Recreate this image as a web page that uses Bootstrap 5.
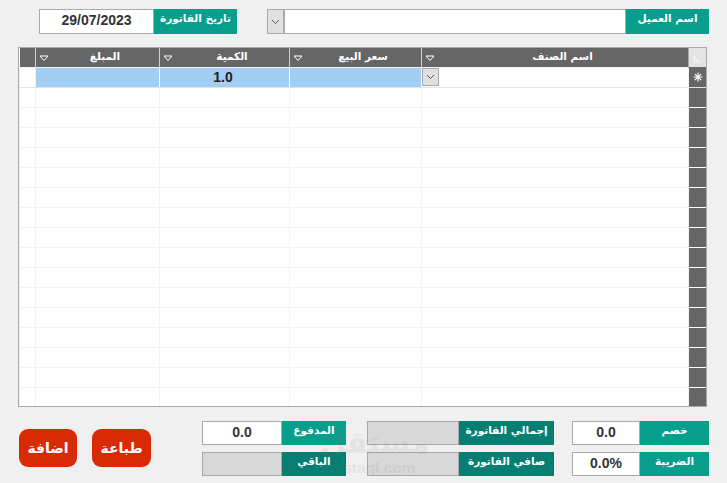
<!DOCTYPE html>
<html lang="ar">
<head>
    <meta charset="UTF-8">
    <meta name="viewport" content="width=device-width, initial-scale=1.0">
    <title>فاتورة</title>
    <link rel="stylesheet" href="https://cdn.jsdelivr.net/npm/bootstrap@5.3.0/dist/css/bootstrap.min.css">
    <style>
        body {
            background-color: #f0f0f0;
            font-family: "DejaVu Sans", "Liberation Sans", sans-serif;
            height: 483px;
            overflow: hidden;
        }
        .page-wrap { width: 727px; height: 483px; padding: 9px 18px 0 18px; position: relative; }
        .top-bar { height: 25px; margin-bottom: 13px; padding-left: 21px; }
        .tag {
            background: #079e8c;
            color: #fff;
            font-size: 10.5px;
            font-weight: 700;
            text-align: center;
            padding-top: 2px;
            height: 100%;
            white-space: nowrap;
        }
        .tag-dark { background: #067f72; }
        .field {
            background: #fff;
            border: 1px solid #a9a9a9;
            height: 100%;
            font-family: "Liberation Sans", sans-serif;
            font-weight: 700;
            font-size: 14px;
            color: #333;
            text-align: center;
            line-height: 20px;
        }
        .field-grey { background: #d8d8d8; }
        .combo-btn {
            width: 17px;
            background: #e0e0e0;
            border: 1px solid #a9a9a9;
            display: flex;
            align-items: center;
            justify-content: center;
        }
        .date-group { width: 198px; }
        .date-group .field { width: 115px; }
        .date-group .tag { width: 83px; }
        .cust-group { width: 442px; }
        .cust-group .tag { width: 83px; }
        .grid-box {
            width: 689px;
            height: 360px;
            border: 1px solid #a9a9a9;
            background: #fff;
            overflow: hidden;
        }
        .inv-grid { table-layout: fixed; width: 688px; border-collapse: collapse; }
        .inv-grid td, .inv-grid th { padding: 0; height: 20px; line-height: 18px; border: 1px solid #f3f3f3; }
        .inv-grid thead th {
            height: 19px;
            background: #666;
            color: #fff;
            font-size: 10.5px;
            font-weight: 700;
            text-align: center;
            border: 0;
            border-left: 1px solid #d0d0d0;
            padding-left: 15px;
            position: relative;
            vertical-align: top;
            line-height: 16px;
        }
        .inv-grid thead th.cnr { background: #666; border-left: 0; padding-left: 0; }
        .inv-grid thead th.sel-head { background: #e4e4e4; border-left: 1px solid #a9a9a9; padding-left: 0; }
        .inv-grid td.sel {
            background: #666;
            border: 0;
            border-bottom: 1px solid #fff;
            border-left: 1px solid #a9a9a9;
            text-align: center;
            vertical-align: middle;
        }
        .inv-grid tr.active-row td { border-bottom: 1px solid #dce6ee; }
        .inv-grid tr.active-row td.hl {
            background: #a3cef1;
            border-right: 1px solid #fff;
            font-family: "Liberation Sans", sans-serif;
            font-weight: 700;
            font-size: 14px;
            color: #222;
            text-align: center;
            padding-right: 3px;
        }
        .sort-mark { position: absolute; left: 3px; top: 7px; display: block; }
        .cell-combo { width: 17px; height: 18px; }
        .bottom-bar { margin-top: 14px; height: 55px; }
        .act-btn {
            background: #d92a06;
            color: #fff;
            border: 0;
            border-radius: 9px;
            width: 58px;
            height: 38px;
            font-size: 14px;
            font-weight: 700;
            padding: 0;
        }
        .act-btn:hover { background: #d92a06; color: #fff; }
        .act-btn-wide { width: 59px; }
        .act-wrap { margin-left: 1px; margin-top: -1px; gap: 15px; }
        .sum-row { height: 24px; }
        .sum-col { gap: 7px; }
        .mark-faint {
            position: absolute;
            left: 320px;
            top: 426px;
            width: 90px;
            color: #777;
            opacity: .1;
            font-weight: 700;
            text-align: center;
            line-height: 1.1;
            pointer-events: none;
        }
        .mark-faint .ar { font-size: 30px; }
        .mark-faint .en { font-size: 15.5px; font-family: "Liberation Sans", sans-serif; }
    </style>
</head>
<body>
    <div class="page-wrap">
        <div class="top-bar d-flex justify-content-between">
            <div class="date-group d-flex">
                <div class="field">29/07/2023</div>
                <div class="tag" dir="rtl">تاريخ الفاتورة</div>
            </div>
            <div class="cust-group d-flex">
                <div class="combo-btn">
                    <svg width="9" height="6" viewBox="0 0 9 6"><path d="M1 1l3.500 3.500L8 1" fill="none" stroke="#555" stroke-width="1"/></svg>
                </div>
                <div class="field flex-grow-1"></div>
                <div class="tag" dir="rtl">اسم العميل</div>
            </div>
        </div>

        <div class="grid-box">
            <table class="inv-grid">
                <colgroup>
                    <col style="width:16px"><col style="width:124px"><col style="width:130px">
                    <col style="width:132px"><col style="width:267px"><col style="width:19px">
                </colgroup>
                <thead>
                    <tr>
                        <th class="cnr"></th>
                        <th><svg class="sort-mark" width="10" height="7" viewBox="0 0 10 7"><path d="M1 1h8L5 5.500z" fill="#666" stroke="#fff" stroke-width="1"/></svg>المبلغ</th>
                        <th><svg class="sort-mark" width="10" height="7" viewBox="0 0 10 7"><path d="M1 1h8L5 5.500z" fill="#666" stroke="#fff" stroke-width="1"/></svg>الكمية</th>
                        <th><svg class="sort-mark" width="10" height="7" viewBox="0 0 10 7"><path d="M1 1h8L5 5.500z" fill="#666" stroke="#fff" stroke-width="1"/></svg>سعر البيع</th>
                        <th><svg class="sort-mark" width="10" height="7" viewBox="0 0 10 7"><path d="M1 1h8L5 5.500z" fill="#666" stroke="#fff" stroke-width="1"/></svg>اسم الصنف</th>
                        <th class="sel-head">
                            <svg class="d-block" width="18" height="19" viewBox="0 0 18 19"><path d="M3 4v12h12z" fill="#ececec" stroke="#d4dde0" stroke-width="1"/></svg>
                        </th>
                    </tr>
                </thead>
                <tbody id="grid-body">
                    <tr class="active-row">
                        <td></td>
                        <td class="hl"></td>
                        <td class="hl">1.0</td>
                        <td class="hl"></td>
                        <td>
                            <div class="combo-btn cell-combo">
                                <svg width="9" height="6" viewBox="0 0 9 6"><path d="M1 1l3.500 3.500L8 1" fill="none" stroke="#555" stroke-width="1"/></svg>
                            </div>
                        </td>
                        <td class="sel">
                            <svg class="d-block mx-auto" width="10" height="10" viewBox="0 0 10 10"><path d="M5 0.500v9M0.500 5h9M1.800 1.800l6.400 6.400M8.200 1.800l-6.400 6.400" stroke="#fff" stroke-width="1.100"/></svg>
                        </td>
                    </tr>
                </tbody>
            </table>
        </div>

        <div class="bottom-bar d-flex">
            <div class="act-wrap d-flex align-items-center">
                <button class="btn act-btn">اضافة</button>
                <button class="btn act-btn act-btn-wide">طباعة</button>
            </div>
            <div class="d-flex flex-column sum-col" style="width:144px;margin-left:51px">
                <div class="sum-row d-flex">
                    <div class="field flex-grow-1">0.0</div>
                    <div class="tag" style="width:64px" dir="rtl">المدفوع</div>
                </div>
                <div class="sum-row d-flex">
                    <div class="field field-grey flex-grow-1"></div>
                    <div class="tag tag-dark" style="width:64px" dir="rtl">الباقي</div>
                </div>
            </div>
            <div class="d-flex flex-column sum-col" style="width:187px;margin-left:21px">
                <div class="sum-row d-flex">
                    <div class="field field-grey flex-grow-1"></div>
                    <div class="tag tag-dark" style="width:95px" dir="rtl">إجمالي الفاتورة</div>
                </div>
                <div class="sum-row d-flex">
                    <div class="field field-grey flex-grow-1"></div>
                    <div class="tag tag-dark" style="width:95px" dir="rtl">صافي الفاتورة</div>
                </div>
            </div>
            <div class="d-flex flex-column sum-col" style="width:137px;margin-left:18px">
                <div class="sum-row d-flex">
                    <div class="field flex-grow-1">0.0</div>
                    <div class="tag" style="width:69px" dir="rtl">خصم</div>
                </div>
                <div class="sum-row d-flex">
                    <div class="field flex-grow-1">0.0%</div>
                    <div class="tag" style="width:69px" dir="rtl">الضريبة</div>
                </div>
            </div>
        </div>

        <div class="mark-faint">
            <div class="ar">مستقل</div>
            <div class="en">mostaql.com</div>
        </div>
    </div>

    <script>
        let gridBody = document.getElementById('grid-body');
        for (let i = 0; i < 16; i++) {
            let row = document.createElement('tr');
            row.innerHTML = '<td></td><td></td><td></td><td></td><td></td><td class="sel"></td>';
            gridBody.appendChild(row);
        }
    </script>
    <script src="https://cdn.jsdelivr.net/npm/bootstrap@5.3.0/dist/js/bootstrap.bundle.min.js"></script>
</body>
</html>
